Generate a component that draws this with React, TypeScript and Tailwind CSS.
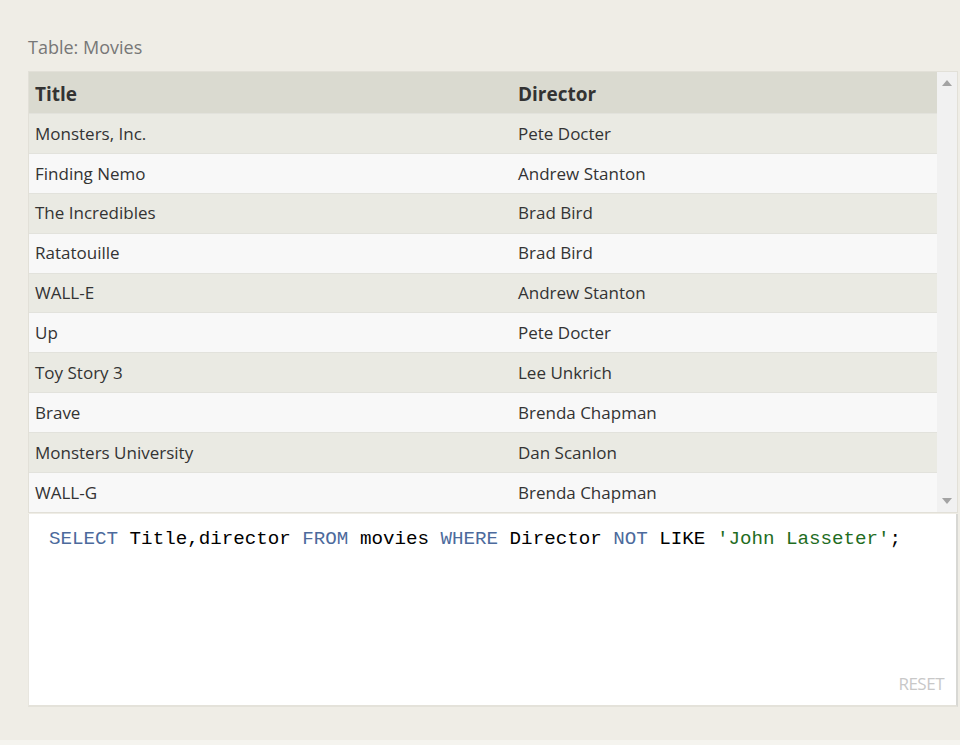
import React from 'react';

const rows: [string, string][] = [
  ['Monsters, Inc.', 'Pete Docter'],
  ['Finding Nemo', 'Andrew Stanton'],
  ['The Incredibles', 'Brad Bird'],
  ['Ratatouille', 'Brad Bird'],
  ['WALL-E', 'Andrew Stanton'],
  ['Up', 'Pete Docter'],
  ['Toy Story 3', 'Lee Unkrich'],
  ['Brave', 'Brenda Chapman'],
  ['Monsters University', 'Dan Scanlon'],
  ['WALL-G', 'Brenda Chapman'],
];

const Arrow: React.FC<{ up?: boolean }> = ({ up }) => (
  <svg width="10" height="6" viewBox="0 0 10 6" className="block">
    <path d={up ? 'M5 0 L10 6 L0 6 Z' : 'M0 0 L10 0 L5 6 Z'} fill="#a3a3a3" />
  </svg>
);

export default function App() {
  return (
    <div className="w-[960px] h-[745px] flex flex-col bg-[#efede6] font-['Open_Sans',sans-serif]">
      <div className="flex flex-col pl-[28px] pr-[2px] pt-[34px]">
        <div className="text-[18px] leading-[26px] text-[#777] mb-[11px]">Table: Movies</div>

        {/* result table with scrollbar */}
        <div className="flex h-[442px] border border-[#e2e0d8] bg-[#f8f8f8]">
          <div className="flex-1 flex flex-col">
            <div className="flex h-[41px] items-center pt-[3px] bg-[#dadad0] text-[19px] font-bold text-[#333]">
              <div className="w-[483px] pl-[6px]">Title</div>
              <div className="flex-1 pl-[6px]">Director</div>
            </div>
            {rows.map(([title, director], i) => (
              <div
                key={title}
                className={
                  'flex h-[40px] items-center text-[17px] text-[#333] border-t border-[#e2e2dc] ' +
                  (i % 2 === 0 ? 'bg-[#eaeae3]' : 'bg-[#f8f8f8]')
                }
              >
                <div className="w-[483px] pl-[6px]">{title}</div>
                <div className="flex-1 pl-[6px]">{director}</div>
              </div>
            ))}
          </div>
          <div className="w-[20px] bg-[#f1f1f1] flex flex-col items-center justify-between py-[8px]">
            <Arrow up />
            <Arrow />
          </div>
        </div>

        {/* query editor */}
        <div className="mt-[1px] h-[193px] bg-white border-l border-[#e8e6df] border-r-2 border-r-[#d8d8d4] border-b-2 border-b-[#e4e2da] flex flex-col justify-between pt-[12px] pb-[9px] pl-[20px] pr-[12px]">
          <div className="font-['Liberation_Mono',monospace] text-[19.2px] leading-[26px] whitespace-pre text-black">
            <span className="text-[#4c6a9c]">SELECT</span> Title,director <span className="text-[#4c6a9c]">FROM</span> movies{' '}
            <span className="text-[#4c6a9c]">WHERE</span> Director <span className="text-[#4c6a9c]">NOT</span> LIKE{' '}
            <span className="text-[#1f6d1f]">'John Lasseter'</span>;
          </div>
          <div className="self-end text-[17px] text-[#c8c8c8] tracking-[-0.5px]">RESET</div>
        </div>
      </div>
      <div className="flex-1" />
      <div className="h-[5px] bg-[#f5f4ef]" />
    </div>
  );
}
